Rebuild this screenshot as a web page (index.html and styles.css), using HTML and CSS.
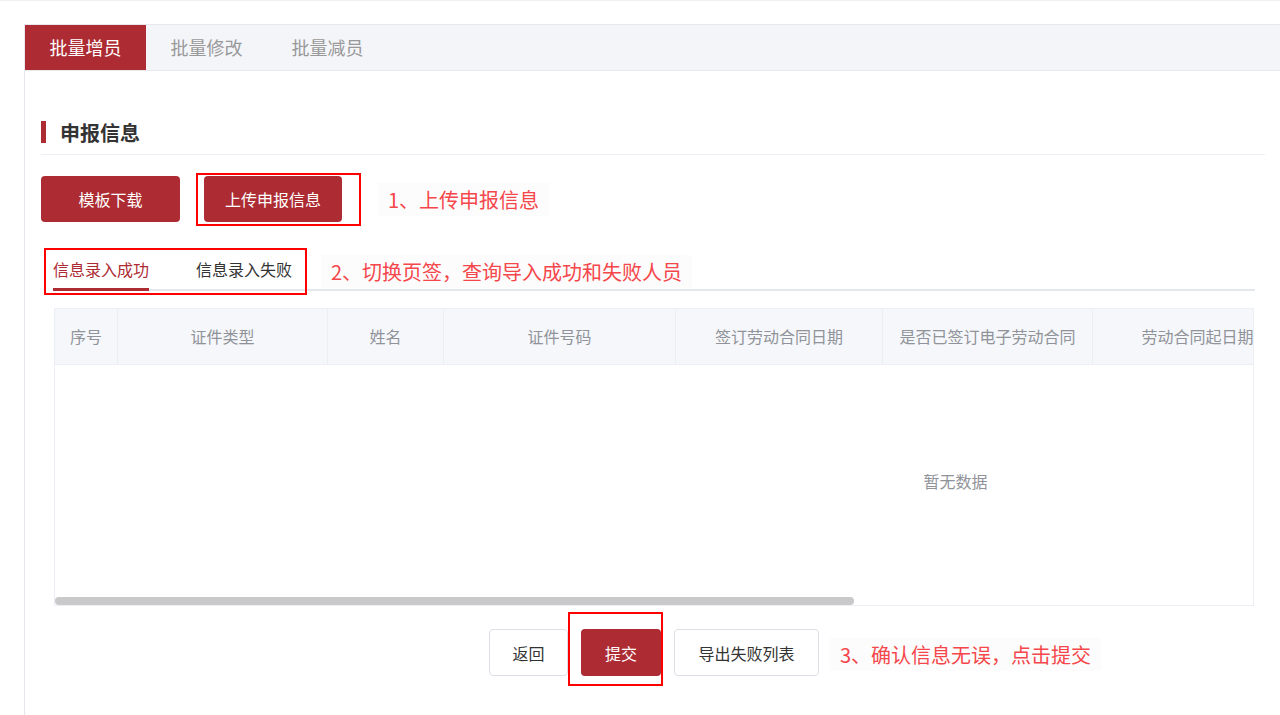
FILE: index.html
```html
<!DOCTYPE html>
<html lang="zh-CN">
<head>
    <meta charset="UTF-8">
    <meta name="viewport" content="width=device-width, initial-scale=1.0">
    <title>批量增员</title>
    <link rel="stylesheet" href="styles.css">
</head>
<body>
    <div class="page">
        <div class="card">
            <div class="top-tabs">
                <div class="top-tab active">批量增员</div>
                <div class="top-tab">批量修改</div>
                <div class="top-tab">批量减员</div>
            </div>

            <div class="content">
                <div class="section-title">
                    <span class="bar"></span>
                    <span>申报信息</span>
                </div>

                <div class="actions">
                    <button type="button" class="btn btn-red btn-download">模板下载</button>
                    <div class="mark-wrap">
                        <button type="button" class="btn btn-red btn-upload">上传申报信息</button>
                        <span class="mark mark-upload"></span>
                    </div>
                    <span class="note note-1">1、上传申报信息</span>
                </div>

                <div class="panel">
                    <div class="sub-tabs">
                        <div class="sub-tab active">信息录入成功</div>
                        <div class="sub-tab">信息录入失败</div>
                        <span class="mark mark-tabs"></span>
                        <span class="note note-2">2、切换页签，查询导入成功和失败人员</span>
                    </div>

                    <div class="table-wrap">
                        <div class="table-inner">
                            <div class="table-head">
                                <div class="th" style="width: 63px">序号</div>
                                <div class="th" style="width: 210px">证件类型</div>
                                <div class="th" style="width: 116px">姓名</div>
                                <div class="th" style="width: 232px">证件号码</div>
                                <div class="th" style="width: 207px">签订劳动合同日期</div>
                                <div class="th" style="width: 210px">是否已签订电子劳动合同</div>
                                <div class="th" style="width: 210px">劳动合同起日期</div>
                                <div class="th" style="width: 553px"></div>
                            </div>
                            <div class="table-empty">暂无数据</div>
                        </div>
                        <div class="scrollbar"><div class="thumb"></div></div>
                    </div>

                    <div class="footer">
                        <button type="button" class="btn btn-plain btn-back">返回</button>
                        <div class="mark-wrap">
                            <button type="button" class="btn btn-red btn-submit">提交</button>
                            <span class="mark mark-submit"></span>
                        </div>
                        <div class="export-wrap">
                            <button type="button" class="btn btn-plain btn-export">导出失败列表</button>
                            <span class="note note-3">3、确认信息无误，点击提交</span>
                        </div>
                    </div>
                </div>
            </div>
        </div>
    </div>
</body>
</html>
```

FILE: styles.css
```css
body {
    margin: 0;
    padding: 0;
    background: #fff;
    font-family: "Noto Sans CJK SC", "Noto Sans", sans-serif;
    color: #333;
    overflow: hidden;
}
.page {
    height: 715px;
    padding: 23px 0 0 24px;
    box-sizing: border-box;
    border-top: 1px solid #f0f0f0;
}
.card {
    width: 1257px;
    height: 100%;
    box-sizing: border-box;
    border: 1px solid #e6e8ee;
    border-right: none;
    border-bottom: none;
    background: #fff;
}
.top-tabs {
    display: flex;
    height: 45px;
    background: #f4f5f9;
    border-bottom: 1px solid #e8eaf0;
}
.top-tab {
    width: 121px;
    line-height: 45px;
    text-align: center;
    font-size: 18px;
    color: #999;
}
.top-tab.active {
    background: #ad2c33;
    color: #fff;
}
.content {
    padding: 0 16px;
}
.section-title {
    display: flex;
    align-items: center;
    height: 26px;
    margin-top: 48px;
    padding-bottom: 9px;
    border-bottom: 1px solid #ebeef5;
    font-size: 20px;
    font-weight: bold;
    color: #333;
}
.section-title .bar {
    width: 5px;
    height: 22px;
    background: #ad2c33;
    margin-right: 14px;
}
.actions {
    display: flex;
    align-items: center;
    gap: 24px;
    margin-top: 21px;
}
.btn {
    height: 46px;
    border-radius: 4px;
    font-family: inherit;
    font-size: 16px;
    cursor: pointer;
    padding: 0;
}
.btn-red {
    background: #ad2c33;
    border: none;
    color: #fff;
}
.btn-plain {
    background: #fff;
    border: 1px solid #dcdfe6;
    color: #333;
    height: 47px;
}
.btn-download {
    width: 139px;
}
.btn-upload {
    width: 138px;
}
.mark-wrap {
    position: relative;
    display: flex;
}
.mark {
    position: absolute;
    border: 2px solid #ff0000;
    box-sizing: border-box;
    pointer-events: none;
}
.mark-upload {
    left: -8px;
    top: -3px;
    width: 165px;
    height: 53px;
}
.note {
    font-size: 20px;
    color: #f5474b;
    background: #fcfcfc;
    padding: 2px 10px;
    white-space: nowrap;
}
.note-1 {
    margin-left: 12px;
}
.panel {
    margin: 0 10px 0 12px;
}
.sub-tabs {
    position: relative;
    display: flex;
    gap: 47px;
    margin-top: 27px;
    border-bottom: 2px solid #e4e7ed;
}
.sub-tab {
    position: relative;
    height: 40px;
    line-height: 40px;
    font-size: 16px;
    color: #333;
}
.sub-tab.active {
    color: #ad2c33;
}
.sub-tab.active::after {
    content: "";
    position: absolute;
    left: 0;
    right: 0;
    bottom: -2px;
    height: 3px;
    background: #ad2c33;
}
.mark-tabs {
    left: -9px;
    top: -1px;
    width: 263px;
    height: 47px;
}
.note-2 {
    position: absolute;
    left: 268px;
    top: 6px;
}
.table-wrap {
    margin: 17px 1px 0 1px;
    border: 1px solid #ebeef5;
    overflow: hidden;
}
.table-inner {
    width: 1801px;
}
.table-head {
    display: flex;
    height: 55px;
    background: #f5f7fa;
    border-bottom: 1px solid #ebeef5;
}
.th {
    flex: none;
    box-sizing: border-box;
    border-right: 1px solid #ebeef5;
    line-height: 55px;
    text-align: center;
    font-size: 16px;
    color: #909399;
}
.table-empty {
    height: 232px;
    line-height: 232px;
    text-align: center;
    font-size: 16px;
    color: #909399;
}
.scrollbar {
    height: 8px;
    background: #fff;
}
.thumb {
    width: 799px;
    height: 8px;
    border-radius: 4px;
    background: #c9c9c9;
}
.footer {
    display: flex;
    justify-content: center;
    align-items: center;
    gap: 13px;
    margin-top: 23px;
}
.btn-back {
    width: 79px;
}
.btn-submit {
    width: 80px;
    height: 47px;
}
.mark-submit {
    left: -13px;
    top: -17px;
    width: 95px;
    height: 74px;
}
.btn-export {
    width: 145px;
}
.export-wrap {
    position: relative;
    display: flex;
}
.note-3 {
    position: absolute;
    left: 156px;
    top: 9px;
}
```
